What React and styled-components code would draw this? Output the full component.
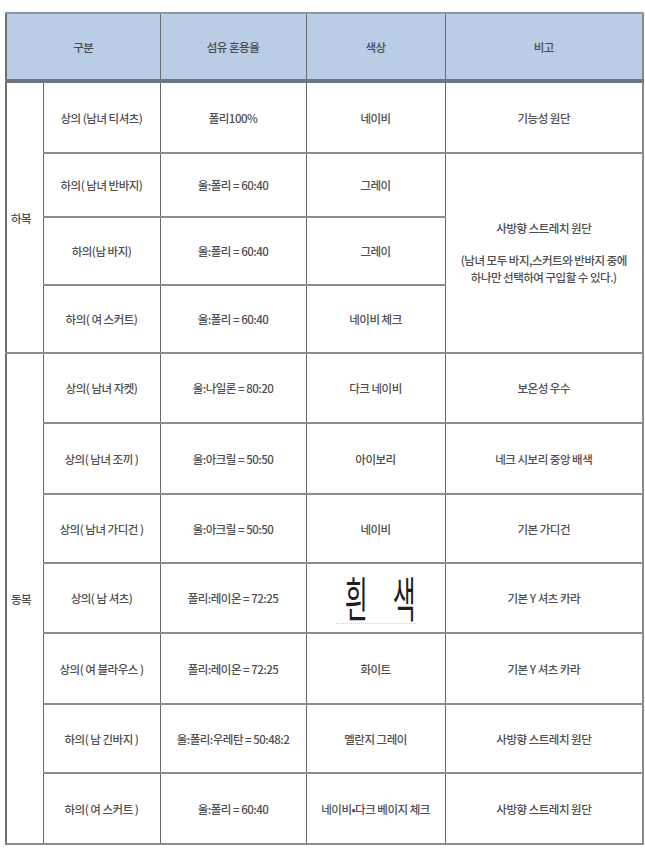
import React from 'react';
import styled, { createGlobalStyle } from 'styled-components';

const summer = [
  { item: "상의 (남녀 티셔츠)", fiber: "폴리100%", color: "네이비", note: "기능성 원단", h: 72 },
  { item: "하의( 남녀 반바지)", fiber: "울:폴리 = 60:40", color: "그레이", h: 64 },
  { item: "하의(남 바지)", fiber: "울:폴리 = 60:40", color: "그레이", h: 68 },
  { item: "하의( 여 스커트)", fiber: "울:폴리 = 60:40", color: "네이비 체크", h: 68 }
];

const winter = [
  { item: "상의( 남녀 자켓)", fiber: "울:나일론 = 80:20", color: "다크 네이비", note: "보온성 우수", h: 70 },
  { item: "상의( 남녀 조끼 )", fiber: "울:아크릴 = 50:50", color: "아이보리", note: "네크 시보리 중앙 배색", h: 71 },
  { item: "상의( 남녀 가디건 )", fiber: "울:아크릴 = 50:50", color: "네이비", note: "기본 가디건", h: 69 },
  { item: "상의( 남 셔츠)", fiber: "폴리:레이온 = 72:25", big: true, note: "기본 Y 셔츠 카라", h: 70 },
  { item: "상의( 여 블라우스 )", fiber: "폴리:레이온 = 72:25", color: "화이트", note: "기본 Y 셔츠 카라", h: 71 },
  { item: "하의( 남 긴바지 )", fiber: "울:폴리:우레탄 = 50:48:2", color: "멜란지 그레이", note: "사방향 스트레치 원단", h: 69 },
  { item: "하의( 여 스커트 )", fiber: "울:폴리 = 60:40", color: "네이비•다크 베이지 체크", note: "사방향 스트레치 원단", h: 71 }
];

const UniformTable = () => {
  return (
    <Page>
      <Table>
        <colgroup>
          <col style={{ width: 37 }} />
          <col style={{ width: 117 }} />
          <col style={{ width: 146 }} />
          <col style={{ width: 139 }} />
          <col style={{ width: 198 }} />
        </colgroup>
        <thead>
          <HeadRow>
            <HeadCell colSpan={2}>구분</HeadCell>
            <HeadCell>섬유 혼용율</HeadCell>
            <HeadCell>색상</HeadCell>
            <HeadCell>비고</HeadCell>
          </HeadRow>
        </thead>
        <tbody>
          {summer.map((row, index) => (
            <Row key={row.item} style={{ height: row.h }}>
              {index === 0 && <SeasonCell rowSpan={summer.length}>하복</SeasonCell>}
              <Cell>{row.item}</Cell>
              <Cell>{row.fiber}</Cell>
              <Cell>{row.color}</Cell>
              {index === 0 && <Cell>{row.note}</Cell>}
              {index === 1 && (
                <Cell rowSpan={3}>
                  <NoteTitle>사방향 스트레치 원단</NoteTitle>
                  <NoteSub>
                    (남녀 모두 바지,스커트와 반바지 중에
                    <br />
                    하나만 선택하여 구입할 수 있다.)
                  </NoteSub>
                </Cell>
              )}
            </Row>
          ))}
          {winter.map((row, index) => (
            <Row key={row.item} style={{ height: row.h }}>
              {index === 0 && <SeasonCell rowSpan={winter.length} $first>동복</SeasonCell>}
              <Cell>{row.item}</Cell>
              <Cell>{row.fiber}</Cell>
              {row.big ? (
                <Cell>
                  <BigText>
                    <Squeeze>흰</Squeeze>
                    <Squeeze>색</Squeeze>
                  </BigText>
                </Cell>
              ) : (
                <Cell>{row.color}</Cell>
              )}
              <Cell>{row.note}</Cell>
            </Row>
          ))}
        </tbody>
      </Table>
    </Page>
  );
};

export default function App() {
  return (
    <>
      <GlobalStyle />
      <UniformTable />
    </>
  );
}

const GlobalStyle = createGlobalStyle`
  html, body {
    margin: 0;
    padding: 0;
    background: #ffffff;
  }
  body {
    font-family: "Noto Sans CJK KR", "Noto Sans", sans-serif;
  }
`;

const Page = styled.div`
  width: 645px;
  height: 856px;
  padding: 12px 0 0 5px;
  box-sizing: border-box;
  background: #ffffff;
`;

const Table = styled.table`
  width: 637px;
  border-collapse: collapse;
  table-layout: fixed;
  border-left: 2px solid #6f6f6f;
  border-right: 2px solid #8a8a8a;
  border-bottom: 2px solid #8a8a8a;
`;

const HeadRow = styled.tr`
  height: 68px;
  background: #b9cde5;
`;

const HeadCell = styled.th`
  font-weight: 500;
  font-size: 11.5px;
  color: #464b53;
  letter-spacing: -0.5px;
  border-top: 2px solid #8d97a3;
  border-bottom: 4px solid #6d7680;
  border-left: 1px solid #6a6f76;
  text-align: center;
  vertical-align: middle;
  padding: 0;
`;

const Row = styled.tr`
  background: #ffffff;
`;

const Cell = styled.td`
  font-size: 11.5px;
  font-weight: 500;
  color: #4f4f4f;
  letter-spacing: -0.5px;
  text-align: center;
  vertical-align: middle;
  padding: 0;
  border-left: 1.5px solid #686868;
  border-top: 2px solid #8c8c8c;
`;

const SeasonCell = styled.td`
  font-size: 11.5px;
  font-weight: 500;
  color: #4f4f4f;
  letter-spacing: -0.5px;
  text-align: left;
  vertical-align: middle;
  padding: 0 0 0 4px;
  border-top: ${({ $first }) => ($first ? '2px solid #8c8c8c' : 'none')};
  border-right: 1.5px solid #686868;
`;

const NoteTitle = styled.div`
  margin-bottom: 16px;
`;

const NoteSub = styled.div`
  line-height: 17px;
`;

const BigText = styled.div`
  display: inline-flex;
  gap: 20px;
  color: #1e1e1e;
  font-size: 48px;
  font-weight: 400;
  letter-spacing: 0;
  line-height: 1;
  padding: 0 2px 3px;
  border-bottom: 1px dotted #e2d3b0;
`;

const Squeeze = styled.span`
  display: inline-block;
  width: 28px;
  transform: scaleX(0.52);
`;
